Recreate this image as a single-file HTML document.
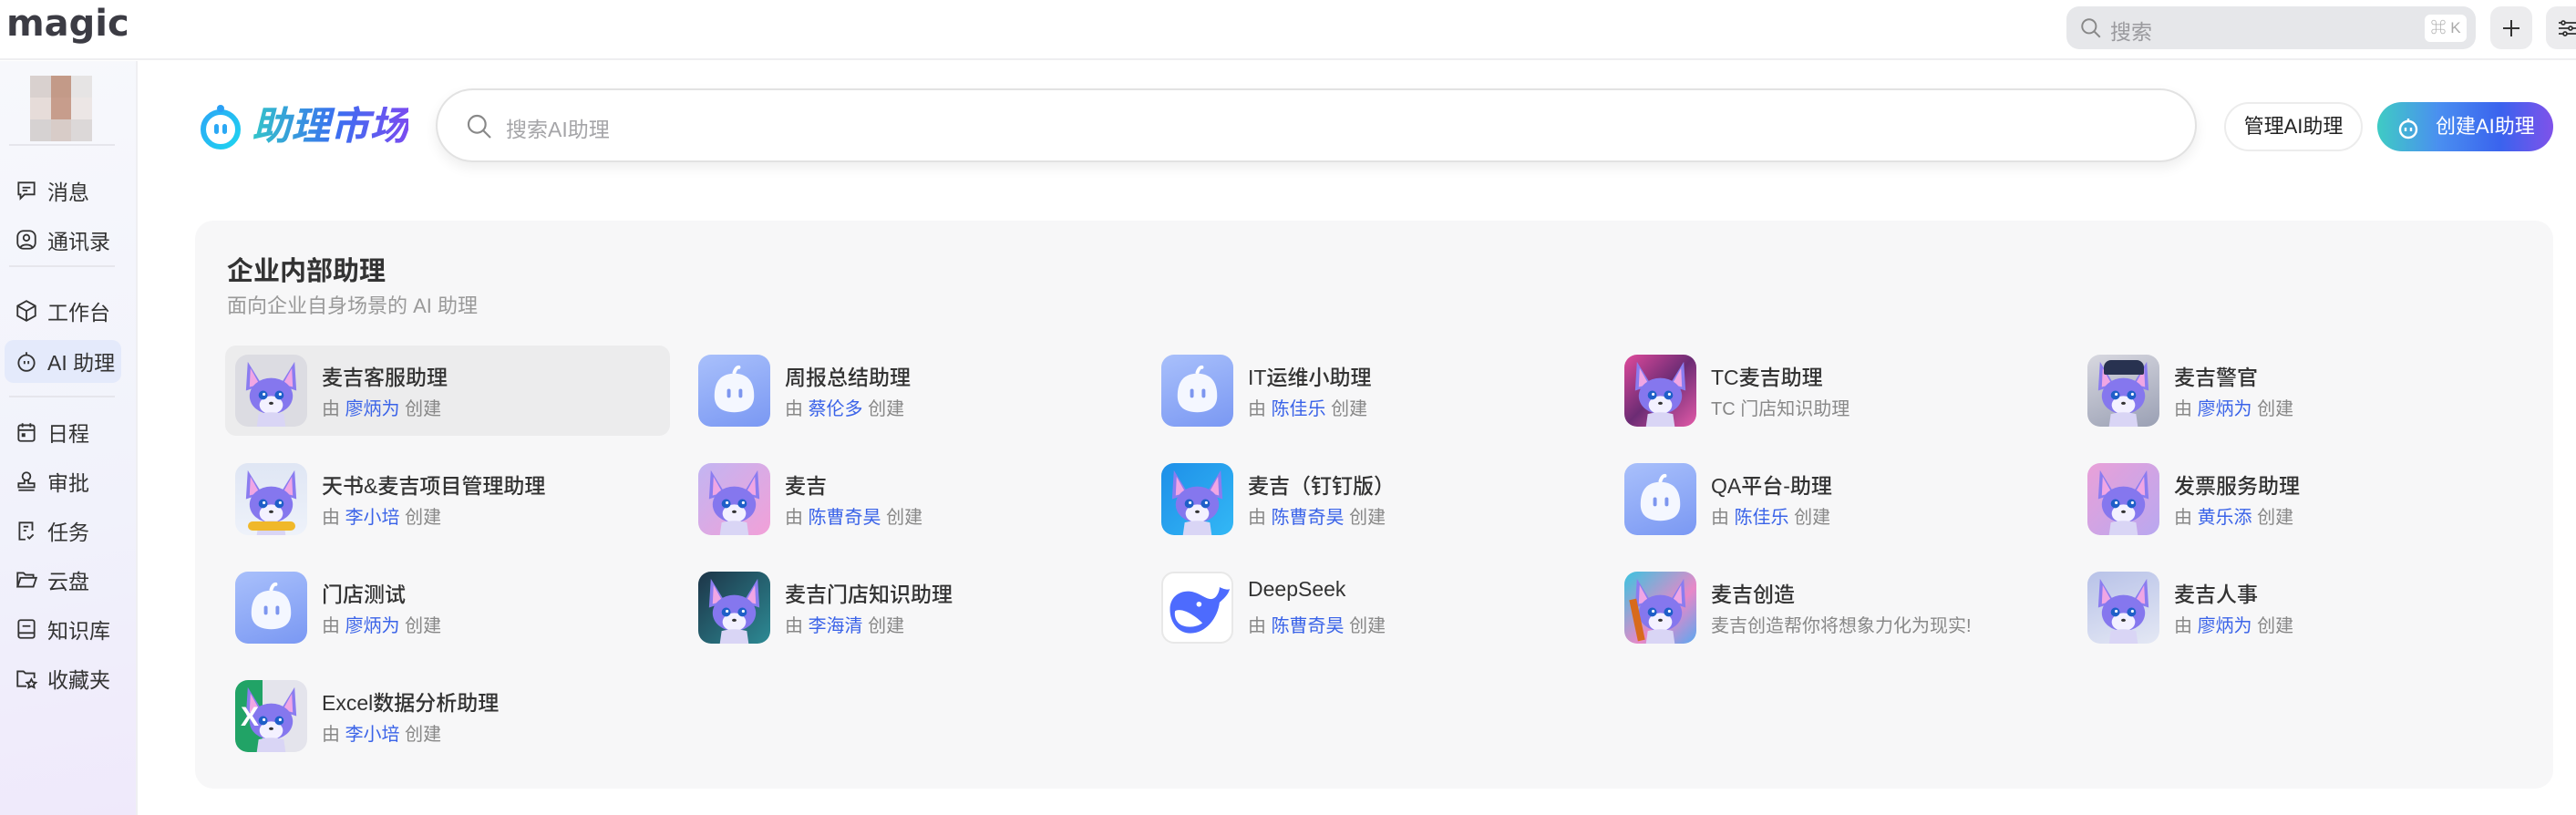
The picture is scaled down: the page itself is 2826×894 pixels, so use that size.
<!DOCTYPE html>
<html><head><meta charset="utf-8"><style>
*{margin:0;padding:0;box-sizing:border-box}
body{width:2826px;height:894px;overflow:hidden;background:#fff;font-family:"Liberation Sans","Noto Sans CJK SC",sans-serif;position:relative;color:#333}
.abs{position:absolute}
.top{left:0;top:0;width:2826px;height:66px;border-bottom:2px solid #eeeef0}
.logo{left:7px;top:3px;font-size:40px;font-weight:bold;color:#3c3c44;letter-spacing:0px;font-family:"DejaVu Sans",sans-serif}
.ts{left:2267px;top:7px;width:449px;height:47px;background:#e6e7ea;border-radius:14px}
.ts span{position:absolute;left:48px;top:9px;font-size:23px;color:#9a9a9e}
.kbd{position:absolute;right:10px;top:9px;width:46px;height:30px;background:#fff;border-radius:6px;font-size:17px;color:#aaa;text-align:center;line-height:30px}
.sq{top:7px;width:46px;height:47px;background:#ececee;border-radius:12px}
.side{left:0;top:67px;width:151px;height:827px;background:linear-gradient(170deg,#f7f8fc 0%,#f1f2fb 60%,#efe9fb 100%);border-right:2px solid #efeff2}
.mi{left:16px;font-size:23px;color:#333;display:flex;align-items:center;height:40px}
.mi svg{width:26px;height:26px;margin-right:10px;fill:none;stroke:#333;stroke-width:1.7}
.sep{left:10px;width:116px;height:2px;background:#e6e6ec}
.title{left:276px;top:104px;font-size:43px;font-weight:bold;font-style:italic;background:linear-gradient(90deg,#33c5c9,#3b6ef0 55%,#7a4cf0);-webkit-background-clip:text;background-clip:text;color:transparent}
.bs{left:478px;top:97px;width:1932px;height:81px;border:2px solid #e2e2e2;border-radius:41px;background:#fff;box-shadow:0 6px 14px rgba(0,0,0,.07)}
.bs span{position:absolute;left:75px;top:24px;font-size:23px;color:#a5a5a8}
.b1{left:2440px;top:112px;width:152px;height:54px;border:2px solid #ececec;border-radius:27px;background:#fff;font-size:22px;text-align:center;line-height:50px;color:#222}
.b2{left:2608px;top:112px;width:193px;height:54px;border-radius:27px;background:linear-gradient(90deg,#3fcbc4,#4a8ff0 35%,#3a63ee 70%,#7f52ea);font-size:22px;color:#fff;line-height:54px;padding-left:64px}
.card{left:214px;top:242px;width:2587px;height:623px;background:#f7f7f8;border-radius:20px}
.h{left:249px;top:274px;font-size:29px;font-weight:bold;color:#333}
.sub{left:249px;top:318px;font-size:22px;color:#999}
.it{width:488px;height:99px;border-radius:12px}
.it.hl{background:#ececed}
.av{position:absolute;left:11px;top:10px;width:79px;height:79px;border-radius:14px;overflow:hidden}
.nm{position:absolute;left:106px;top:16px;font-size:23px;color:#333;white-space:nowrap;font-weight:500}
.by{position:absolute;left:106px;top:53px;font-size:20px;color:#888;white-space:nowrap}
.by b{font-weight:normal;color:#3a63e8}
.rb{background:linear-gradient(160deg,#a9c0fb,#7a98f3)}
</style></head><body>
<svg width="0" height="0" style="position:absolute">
<defs>
<symbol id="fox" viewBox="0 0 80 80">
<path d="M14 8 L30 34 L12 40Z" fill="#8a7cf0"/><path d="M17 15 L27 33 L16 36Z" fill="#f0a6e4"/>
<path d="M66 8 L50 34 L68 40Z" fill="#8a7cf0"/><path d="M63 15 L53 33 L64 36Z" fill="#f0a6e4"/>
<ellipse cx="40" cy="46" rx="24" ry="20" fill="#8577ee"/>
<ellipse cx="40" cy="56" rx="13" ry="10" fill="#f3f1ff"/>
<circle cx="31" cy="45" r="5" fill="#1e5fc8"/><circle cx="49" cy="45" r="5" fill="#1e5fc8"/>
<circle cx="32" cy="44" r="1.6" fill="#fff"/><circle cx="50" cy="44" r="1.6" fill="#fff"/>
<ellipse cx="40" cy="54" rx="2.5" ry="1.6" fill="#333"/>
<path d="M26 66 Q40 62 54 66 L56 80 L24 80Z" fill="#d9d5f5"/>
</symbol>
<symbol id="bot" viewBox="0 0 80 80">
<path d="M40 20 q2-6 5-6" stroke="#fff" stroke-width="4" fill="none" stroke-linecap="round"/>
<path d="M40 21 C58 21 62 34 62 46 C62 58 54 64 40 64 C26 64 18 58 18 46 C18 34 22 21 40 21Z" fill="#f4f7ff"/>
<rect x="32" y="38" width="4" height="10" rx="2" fill="#7d96ef"/><rect x="45" y="38" width="4" height="10" rx="2" fill="#7d96ef"/>
</symbol>
</defs></svg>

<div class="abs top"></div>
<div class="abs logo">magic</div>
<div class="abs ts"><svg style="position:absolute;left:14px;top:11px" width="26" height="26" viewBox="0 0 24 24" fill="none" stroke="#888" stroke-width="1.8"><circle cx="10" cy="10" r="7"/><path d="M15 15l6 6"/></svg><span>搜索</span><div class="kbd">⌘ K</div></div>
<div class="abs sq" style="left:2732px"><svg style="position:absolute;left:11px;top:12px" width="24" height="24" viewBox="0 0 24 24" stroke="#333" stroke-width="2"><path d="M12 3v18M3 12h18"/></svg></div>
<div class="abs sq" style="left:2793px;width:50px"><svg style="position:absolute;left:12px;top:12px" width="24" height="24" viewBox="0 0 24 24" fill="none" stroke="#333" stroke-width="1.8"><path d="M2 6h20M2 12h20M2 18h20"/><circle cx="7" cy="6" r="2" fill="#ececee"/><circle cx="15" cy="12" r="2" fill="#ececee"/><circle cx="9" cy="18" r="2" fill="#ececee"/></svg></div>

<div class="abs side"></div>
<div class="abs" style="left:33px;top:83px;width:68px;height:72px;display:grid;grid-template-columns:1fr 1fr 1fr;grid-template-rows:1fr 1fr 1fr">
<div style="background:#d9d1cf"></div><div style="background:#c39a88"></div><div style="background:#e6e4e4"></div>
<div style="background:#e6dcd9"></div><div style="background:#c79d8c"></div><div style="background:#ece6e5"></div>
<div style="background:#d6d2d2"></div><div style="background:#d8ccc8"></div><div style="background:#dcd8d8"></div></div>
<div class="abs sep" style="top:158px"></div>
<div class="abs mi" style="top:189px"><svg viewBox="0 0 24 24"><path d="M4 4h16v12H10l-4 4v-4H4z"/><path d="M8 9h8M8 12h5"/></svg>消息</div>
<div class="abs mi" style="top:243px"><svg viewBox="0 0 24 24"><rect x="3" y="3" width="18" height="18" rx="6"/><circle cx="12" cy="10" r="3"/><path d="M6 20c1-4 11-4 12 0"/></svg>通讯录</div>
<div class="abs sep" style="top:291px"></div>
<div class="abs mi" style="top:321px"><svg viewBox="0 0 24 24"><path d="M12 2l9 5v10l-9 5-9-5V7z"/><path d="M3 7l9 5 9-5M12 12v10"/></svg>工作台</div>
<div class="abs" style="left:5px;top:373px;width:128px;height:47px;background:#e4eafb;border-radius:10px"></div>
<div class="abs mi" style="top:376px"><svg viewBox="0 0 24 24"><circle cx="12" cy="14" r="8"/><path d="M12 6V3M10 12v3M14 12v3"/></svg>AI 助理</div>
<div class="abs sep" style="top:434px"></div>
<div class="abs mi" style="top:454px"><svg viewBox="0 0 24 24"><rect x="4" y="5" width="16" height="16" rx="2"/><path d="M4 10h16M8 3v4M16 3v4"/><rect x="8" y="14" width="2" height="2" fill="#333"/></svg>日程</div>
<div class="abs mi" style="top:508px"><svg viewBox="0 0 24 24"><circle cx="12" cy="7" r="4"/><path d="M10 11v3H4v4h16v-4h-6v-3M4 21h16"/></svg>审批</div>
<div class="abs mi" style="top:562px"><svg viewBox="0 0 24 24"><path d="M18 12V4H5v17h6"/><path d="M9 8h5M9 12h3M13 18l2 2 4-4"/></svg>任务</div>
<div class="abs mi" style="top:616px"><svg viewBox="0 0 24 24"><path d="M3 19V5h6l2 2h8v3"/><path d="M3 19l3-9h16l-3 9z"/></svg>云盘</div>
<div class="abs mi" style="top:670px"><svg viewBox="0 0 24 24"><rect x="4" y="3" width="16" height="18" rx="2"/><path d="M8 9h8M4 16h16"/></svg>知识库</div>
<div class="abs mi" style="top:724px"><svg viewBox="0 0 24 24"><path d="M12 20H3V5h6l2 2h9v5"/><path d="M17 13l1.5 3 3 .4-2.2 2 .6 3-2.9-1.5-2.9 1.5.6-3-2.2-2 3-.4z"/></svg>收藏夹</div>

<svg class="abs" style="left:216px;top:112px" width="52" height="52" viewBox="0 0 52 52"><defs><linearGradient id="lg" x1="0" y1="0" x2="1" y2="1"><stop offset="0" stop-color="#2aa8f5"/><stop offset="1" stop-color="#1fd3f0"/></linearGradient></defs><circle cx="26" cy="30" r="19" fill="none" stroke="url(#lg)" stroke-width="6"/><circle cx="26" cy="7" r="4" fill="#2aa0f5"/><rect x="19" y="24" width="5" height="11" rx="2.5" fill="#2aa8f5"/><rect x="28" y="24" width="5" height="11" rx="2.5" fill="#2aa8f5"/></svg>
<div class="abs title">助理市场</div>
<div class="abs bs"><svg style="position:absolute;left:30px;top:24px" width="32" height="32" viewBox="0 0 24 24" fill="none" stroke="#888" stroke-width="1.6"><circle cx="10" cy="10" r="7"/><path d="M15 15l6 6"/></svg><span>搜索AI助理</span></div>
<div class="abs b1">管理AI助理</div>
<div class="abs b2"><svg style="position:absolute;left:20px;top:14px" width="28" height="28" viewBox="0 0 28 28" fill="none" stroke="#fff" stroke-width="2.4"><circle cx="14" cy="16" r="9"/><path d="M14 7V4"/><path d="M11 14v4M17 14v4"/></svg>创建AI助理</div>

<div class="abs card"></div>
<div class="abs h">企业内部助理</div>
<div class="abs sub">面向企业自身场景的 AI 助理</div>

<div class="abs it hl" style="left:247px;top:379px"><div class="av" style="background:#dcdce2"><svg width="79" height="79"><use href="#fox"/></svg></div><div class="nm">麦吉客服助理</div><div class="by">由 <b>廖炳为</b> 创建</div></div>
<div class="abs it" style="left:755px;top:379px"><div class="av rb"><svg width="79" height="79"><use href="#bot"/></svg></div><div class="nm">周报总结助理</div><div class="by">由 <b>蔡伦多</b> 创建</div></div>
<div class="abs it" style="left:1263px;top:379px"><div class="av rb"><svg width="79" height="79"><use href="#bot"/></svg></div><div class="nm">IT运维小助理</div><div class="by">由 <b>陈佳乐</b> 创建</div></div>
<div class="abs it" style="left:1771px;top:379px"><div class="av" style="background:linear-gradient(135deg,#e04a9c,#6c2c74 50%,#e35aa8)"><svg width="79" height="79"><use href="#fox"/></svg></div><div class="nm">TC麦吉助理</div><div class="by">TC 门店知识助理</div></div>
<div class="abs it" style="left:2279px;top:379px"><div class="av" style="background:linear-gradient(160deg,#d8d8e0,#9aa0b4)"><svg width="79" height="79"><use href="#fox"/></svg><div style="position:absolute;left:18px;top:6px;width:44px;height:16px;background:#283250;border-radius:8px 8px 2px 2px"></div></div><div class="nm">麦吉警官</div><div class="by">由 <b>廖炳为</b> 创建</div></div>

<div class="abs it" style="left:247px;top:498px"><div class="av" style="background:linear-gradient(180deg,#dfe6f4,#eef2fa)"><svg width="79" height="79"><use href="#fox"/></svg><div style="position:absolute;left:14px;top:64px;width:52px;height:10px;background:#f0b82a;border-radius:5px"></div></div><div class="nm">天书&amp;麦吉项目管理助理</div><div class="by">由 <b>李小培</b> 创建</div></div>
<div class="abs it" style="left:755px;top:498px"><div class="av" style="background:linear-gradient(135deg,#c2b5f2,#f2a0d8)"><svg width="79" height="79"><use href="#fox"/></svg></div><div class="nm">麦吉</div><div class="by">由 <b>陈曹奇昊</b> 创建</div></div>
<div class="abs it" style="left:1263px;top:498px"><div class="av" style="background:linear-gradient(135deg,#1e8fe8,#33b8f5)"><svg width="79" height="79"><use href="#fox"/></svg></div><div class="nm">麦吉（钉钉版）</div><div class="by">由 <b>陈曹奇昊</b> 创建</div></div>
<div class="abs it" style="left:1771px;top:498px"><div class="av rb"><svg width="79" height="79"><use href="#bot"/></svg></div><div class="nm">QA平台-助理</div><div class="by">由 <b>陈佳乐</b> 创建</div></div>
<div class="abs it" style="left:2279px;top:498px"><div class="av" style="background:linear-gradient(135deg,#e9a0d8,#b9a8f0)"><svg width="79" height="79"><use href="#fox"/></svg></div><div class="nm">发票服务助理</div><div class="by">由 <b>黄乐添</b> 创建</div></div>

<div class="abs it" style="left:247px;top:617px"><div class="av rb"><svg width="79" height="79"><use href="#bot"/></svg></div><div class="nm">门店测试</div><div class="by">由 <b>廖炳为</b> 创建</div></div>
<div class="abs it" style="left:755px;top:617px"><div class="av" style="background:linear-gradient(135deg,#1d3548,#2d8a94)"><svg width="79" height="79"><use href="#fox"/></svg></div><div class="nm">麦吉门店知识助理</div><div class="by">由 <b>李海清</b> 创建</div></div>
<div class="abs it" style="left:1263px;top:617px"><div class="av" style="background:#fff;border:2px solid #e8e8e8"><svg width="75" height="75" viewBox="0 0 80 80"><path d="M8 42 C8 26 22 18 36 22 C44 24 50 30 56 30 C62 30 66 22 66 16 C70 18 76 20 78 18 C76 26 70 30 66 34 C64 52 50 70 32 70 C18 70 8 58 8 42Z" fill="#4d6bfe"/><path d="M14 44 C20 40 34 46 46 58 C38 64 24 64 18 58 C14 54 13 48 14 44Z" fill="#fff"/><circle cx="42" cy="36" r="3" fill="#fff"/></svg></div><div class="nm">DeepSeek</div><div class="by">由 <b>陈曹奇昊</b> 创建</div></div>
<div class="abs it" style="left:1771px;top:617px"><div class="av" style="background:linear-gradient(135deg,#3ac4e0,#e888c8 60%,#5aa8f0)"><svg width="79" height="79"><use href="#fox"/></svg><div style="position:absolute;left:10px;top:30px;width:8px;height:46px;background:#d86a1c;transform:rotate(-12deg)"></div></div><div class="nm">麦吉创造</div><div class="by">麦吉创造帮你将想象力化为现实!</div></div>
<div class="abs it" style="left:2279px;top:617px"><div class="av" style="background:linear-gradient(160deg,#b8c2e8,#e4e8f4)"><svg width="79" height="79"><use href="#fox"/></svg></div><div class="nm">麦吉人事</div><div class="by">由 <b>廖炳为</b> 创建</div></div>

<div class="abs it" style="left:247px;top:736px"><div class="av" style="background:linear-gradient(90deg,#21a366 0,#21a366 38%,#e4e4ec 38%)"><svg width="79" height="79"><use href="#fox"/></svg><div style="position:absolute;left:6px;top:24px;font-size:30px;color:#fff;font-weight:bold">X</div></div><div class="nm">Excel数据分析助理</div><div class="by">由 <b>李小培</b> 创建</div></div>
</body></html>
